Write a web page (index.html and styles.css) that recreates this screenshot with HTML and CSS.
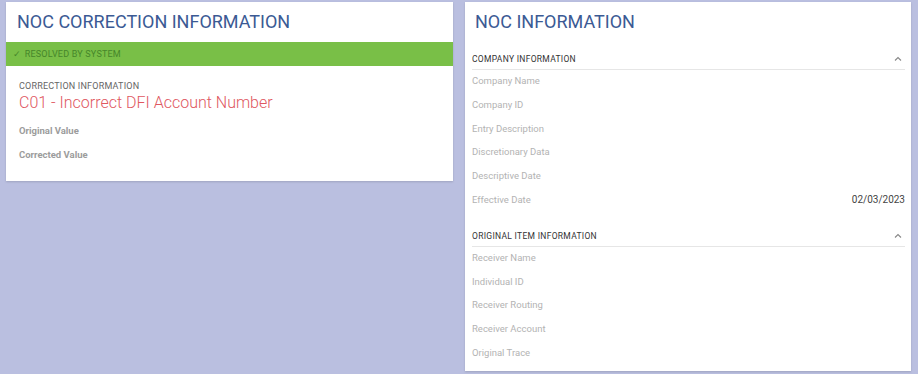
FILE: index.html
```html
<html lang="en">
<head>
    <meta charset="UTF-8">
    <meta name="viewport" content="width=device-width, initial-scale=1.0">
    <title>NOC Detail</title>
    <link rel="stylesheet" href="styles.css">
</head>
<body>
    <div class="page">
        <!-- Left card: correction -->
        <div class="card card-left">
            <h1 class="card-title">NOC CORRECTION INFORMATION</h1>
            <div class="status-bar">
                <span class="check">&#10003;</span> RESOLVED BY SYSTEM
            </div>
            <div class="correction">
                <div class="small-label">CORRECTION INFORMATION</div>
                <div class="correction-code">C01 - Incorrect DFI Account Number</div>
                <div class="value-row">Original Value</div>
                <div class="value-row">Corrected Value</div>
            </div>
        </div>

        <!-- Right card: NOC info -->
        <div class="card card-right">
            <h1 class="card-title">NOC INFORMATION</h1>

            <div class="section">
                <div class="section-head">
                    <span>COMPANY INFORMATION</span>
                    <svg class="chevron" width="8" height="6" viewBox="0 0 8 6"><path d="M1 4.5 L4 1.5 L7 4.5" fill="none" stroke="#888" stroke-width="1.1"/></svg>
                </div>
                <div class="info-row"><span>Company Name</span><span class="info-value"></span></div>
                <div class="info-row"><span>Company ID</span><span class="info-value"></span></div>
                <div class="info-row"><span>Entry Description</span><span class="info-value"></span></div>
                <div class="info-row"><span>Discretionary Data</span><span class="info-value"></span></div>
                <div class="info-row"><span>Descriptive Date</span><span class="info-value"></span></div>
                <div class="info-row"><span>Effective Date</span><span class="info-value">02/03/2023</span></div>
            </div>

            <div class="section">
                <div class="section-head">
                    <span>ORIGINAL ITEM INFORMATION</span>
                    <svg class="chevron" width="8" height="6" viewBox="0 0 8 6"><path d="M1 4.5 L4 1.5 L7 4.5" fill="none" stroke="#888" stroke-width="1.1"/></svg>
                </div>
                <div class="info-row"><span>Receiver Name</span><span class="info-value"></span></div>
                <div class="info-row"><span>Individual ID</span><span class="info-value"></span></div>
                <div class="info-row"><span>Receiver Routing</span><span class="info-value"></span></div>
                <div class="info-row"><span>Receiver Account</span><span class="info-value"></span></div>
                <div class="info-row"><span>Original Trace</span><span class="info-value"></span></div>
            </div>
        </div>
    </div>
</body>
</html>
```

FILE: styles.css
```css
body {
    font-family: Roboto, "Liberation Sans", sans-serif;
    margin: 0;
    padding: 0;
    background-color: #babfe0;
}

.page {
    display: flex;
    align-items: flex-start;
    gap: 12px;
    padding: 2px 7px 0 6px;
}

.card {
    background: #fff;
    box-shadow: 0 1px 2px rgba(0, 0, 0, 0.15);
}

.card-left {
    width: 447px;
    height: 179px;
}

.card-right {
    width: 446px;
    height: 369px;
}

.card-title {
    margin: 0;
    font-size: 18px;
    font-weight: 400;
    color: #3b5a94;
    line-height: 20px;
    padding: 10px 0 10px 11px;
}

.card-right .card-title {
    padding-left: 10px;
}

.status-bar {
    background-color: #79bf47;
    color: #46862a;
    font-size: 9px;
    height: 24px;
    line-height: 24px;
    padding-left: 7px;
    letter-spacing: 0.2px;
}

.check {
    font-size: 9px;
    margin-right: 1px;
}

.correction {
    padding: 14px 13px 0 13px;
}

.small-label {
    font-size: 9px;
    color: #666;
    line-height: 12px;
    letter-spacing: 0.2px;
}

.correction-code {
    font-size: 16px;
    font-weight: 300;
    color: #e0575f;
    line-height: 22px;
    margin-bottom: 5px;
}

.value-row {
    font-size: 9.5px;
    font-weight: 700;
    color: #9c9c9c;
    line-height: 24px;
}

.section {
    padding: 0 6px 0 7px;
}

.section:first-of-type {
    margin-top: 7px;
}

.section + .section {
    margin-top: 13px;
}

.section-head {
    display: flex;
    justify-content: space-between;
    align-items: center;
    font-size: 8.5px;
    color: #333;
    letter-spacing: 0.3px;
    height: 20px;
    border-bottom: 1px solid #e6e6e6;
    padding-right: 3px;
}

.info-row {
    display: flex;
    justify-content: space-between;
    font-size: 9.5px;
    color: #b3b3b3;
    height: 23.8px;
    line-height: 22px;
}

.info-value {
    color: #444;
    font-size: 10px;
}
```
